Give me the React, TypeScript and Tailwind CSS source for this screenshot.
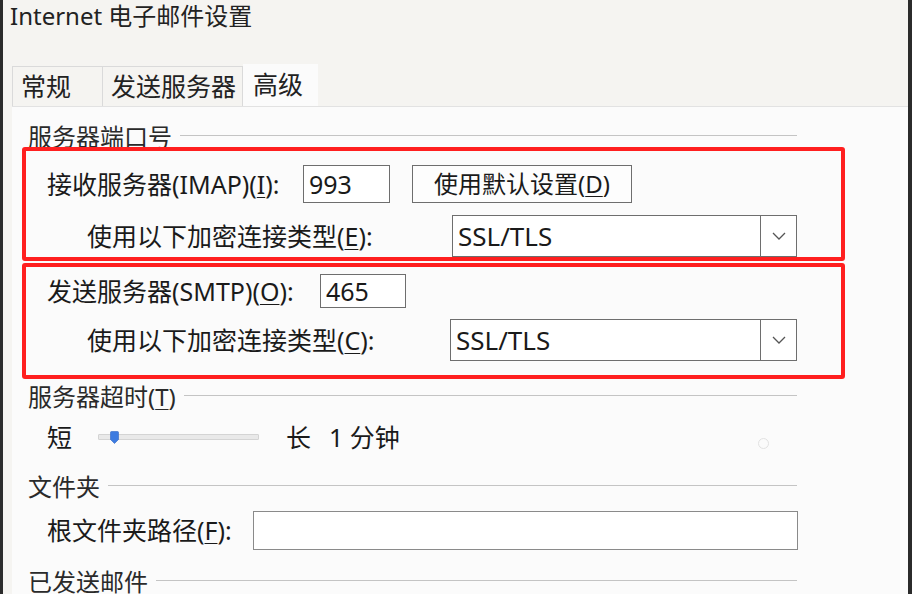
import React from "react";

const FONT = { fontFamily: '"Noto Sans", "Noto Sans CJK SC", sans-serif' };

function Key({ k }: { k: string }) {
  return <span className="underline underline-offset-[3px] decoration-1">{k}</span>;
}

function GroupHeader({ label, className = "" }: { label: React.ReactNode; className?: string }) {
  return (
    <div className={`flex h-[26px] w-[785px] shrink-0 items-center pl-[16px] ${className}`}>
      <span className="whitespace-nowrap text-[24px] leading-[26px] text-[#2a2a2a]">{label}</span>
      <div className="ml-[8px] -mt-[3px] h-px flex-1 bg-[#c4c4c4]" />
    </div>
  );
}

function Select({ value, w }: { value: string; w: string }) {
  return (
    <div className={`flex h-[42px] ${w} border border-[#6e6e6e] bg-white`}>
      <div className="flex flex-1 items-center pl-[5px] text-[26px] leading-none text-[#1a1a1a]">{value}</div>
      <div className="flex w-[36px] items-center justify-center border-l border-[#6e6e6e]">
        <svg width="14" height="8" viewBox="0 0 14 8" fill="none">
          <path d="M1 1l6 6 6-6" stroke="#555" strokeWidth="1.3" />
        </svg>
      </div>
    </div>
  );
}

export default function App() {
  return (
    <div className="flex h-[594px] w-[912px] overflow-hidden text-[#1a1a1a]" style={FONT}>
      <div className="w-[3px] shrink-0 bg-[#2b2b2b]" />
      <div className="flex flex-1 flex-col overflow-hidden bg-[#f5f4f1]">
        {/* title */}
        <div className="h-[64px] shrink-0 pl-[7px] pt-[2px] text-[24px] leading-[28px] text-[#222]">Internet 电子邮件设置</div>

        {/* tabs */}
        <div className="flex h-[42px] shrink-0 items-end pl-[9px]">
          <div className="flex h-[40px] w-[91px] items-center border border-b-0 border-[#dadada] pl-[8px] text-[25px] text-[#222]">常规</div>
          <div className="flex h-[40px] w-[140px] items-center border-t border-r border-[#dadada] pl-[8px] text-[25px] text-[#222]">发送服务器</div>
          <div className="flex h-[42px] w-[75px] items-center bg-[#fbfbfb] pl-[10px] text-[25px] text-[#222]">高级</div>
        </div>

        {/* panel */}
        <div className="ml-[9px] flex min-h-0 flex-1 flex-col overflow-hidden border-t border-[#e2e2e2] bg-[#fbfbfb]">
          <GroupHeader label="服务器端口号" className="mt-[17px]" />

          <div className="relative -mt-[3px] ml-[10px] w-[823px] shrink-0 rounded-[3px] border-[4px] border-[#ff1f1f] bg-[#fbfbfb] pt-[14px]">
            <div className="flex h-[38px] items-center pl-[21px]">
              <span className="w-[256px] text-[25px] leading-none">
                接收服务器(IMAP)(<Key k="I" />):
              </span>
              <div className="flex h-[38px] w-[87px] items-center border border-[#6e6e6e] bg-white pl-[5px] text-[25px] leading-none">993</div>
              <div className="ml-[22px] flex h-[38px] w-[220px] items-center justify-center border border-[#6e6e6e] bg-[#fdfdfd] text-[24px] leading-none">
                使用默认设置(<Key k="D" />)
              </div>
            </div>
            <div className="mt-[12px] flex h-[42px] items-center pl-[61px]">
              <span className="w-[365px] text-[25px] leading-none">
                使用以下加密连接类型(<Key k="E" />):
              </span>
              <Select value="SSL/TLS" w="w-[345px]" />
            </div>
          </div>

          <div className="ml-[10px] mt-[2px] w-[823px] shrink-0 rounded-[3px] border-[4px] border-[#ff1f1f] pb-[14px] pt-[7px]">
            <div className="flex h-[34px] items-center pl-[21px]">
              <span className="w-[273px] text-[25px] leading-none">
                发送服务器(SMTP)(<Key k="O" />):
              </span>
              <div className="flex h-[34px] w-[86px] items-center border border-[#6e6e6e] bg-white pl-[5px] text-[25px] leading-none">465</div>
            </div>
            <div className="mt-[11px] flex h-[42px] items-center pl-[61px]">
              <span className="w-[363px] text-[25px] leading-none">
                使用以下加密连接类型(<Key k="C" />):
              </span>
              <Select value="SSL/TLS" w="w-[347px]" />
            </div>
          </div>

          <GroupHeader
            label={
              <>
                服务器超时(<Key k="T" />)
              </>
            }
            className="mt-[5px]"
          />

          {/* slider */}
          <div className="mt-[13px] flex h-[28px] shrink-0 items-center pl-[35px]">
            <span className="w-[51px] text-[25px] leading-none">短</span>
            <div className="relative h-[6px] w-[161px] rounded-[1px] border border-[#d4d4d4] bg-[#e9e9e9]">
              <svg className="absolute -top-[4px] left-[11px]" width="9" height="13" viewBox="0 0 9 13">
                <path d="M0.5 1.5Q0.5 0.5 1.5 0.5H7.5Q8.5 0.5 8.5 1.5V8.5L4.5 12.5L0.5 8.5Z" fill="#3d7be0" stroke="#2f66c4" strokeWidth="0.6" />
              </svg>
            </div>
            <span className="ml-[27px] text-[25px] leading-none">长</span>
            <span className="ml-[18px] text-[25px] leading-none">1 分钟</span>
            <div className="ml-[358px] mt-[12px] h-[11px] w-[11px] rounded-full border border-[#e2e2e2]" />
          </div>

          <GroupHeader label="文件夹" className="mt-[23px]" />

          <div className="mt-[11px] flex h-[39px] shrink-0 items-center pl-[35px]">
            <span className="w-[206px] text-[25px] leading-none">
              根文件夹路径(<Key k="F" />):
            </span>
            <div className="h-[39px] w-[545px] border border-[#8a8a8a] bg-white" />
          </div>

          <GroupHeader label="已发送邮件" className="mt-[19px]" />
        </div>
      </div>
      <div className="w-[4px] shrink-0 bg-[#2b2b2b]" />
    </div>
  );
}
